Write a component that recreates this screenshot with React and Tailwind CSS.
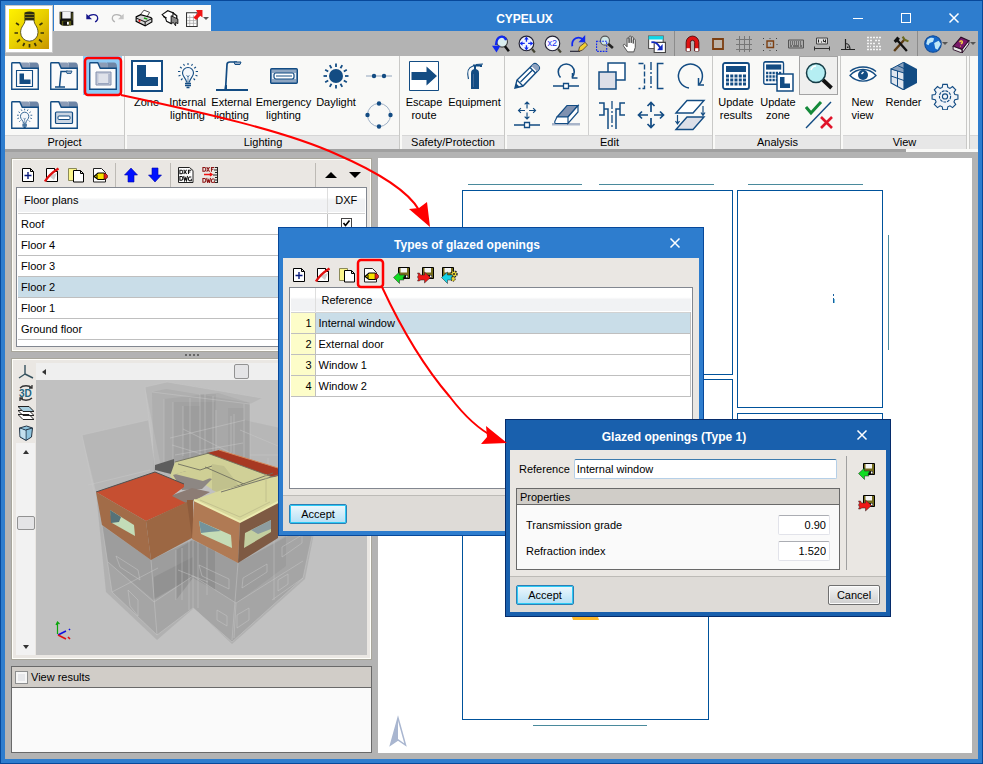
import React from "react";

const NAVY = "#134c83";

/* ---------- small toolbar drawings (16 x 16) ---------- */

function Px({ children, size = 16, box = "0 0 16 16" }) {
  return (
    <svg width={size} height={size} viewBox={box} fill="none" className="block shrink-0" aria-hidden="true">
      {children}
    </svg>
  );
}

const SheetPath = () => <path d="M2.5 1.5h8l3 3v10h-11z M10.5 1.5v3h3" fill="#fff" stroke="#000" />;

const AddIcon = () => (
  <Px>
    <SheetPath />
    <path d="M4.5 8.500h7M8 5v7" stroke="#0a1a7c" strokeWidth="1.400" />
  </Px>
);
const RemoveIcon = () => (
  <Px>
    <SheetPath />
    <path d="M5 9l5 4 3-7z" fill="#cfcfcf" />
    <path d="M1 14.500C4 9 9 5 14.500 1.500" stroke="#e01010" strokeWidth="2.400" />
  </Px>
);
const CopyIcon = () => (
  <Px>
    <path d="M.500 1.500h8v12h-8z" fill="#fbf58a" stroke="#8b8a58" />
    <path d="M5.500 3.500h7l3 3v8.500h-10z M12.500 3.500v3h3" fill="#fff" stroke="#000" />
  </Px>
);
const EditIcon = () => (
  <Px>
    <path d="M1.500 1.500h8l4 4v9.500h-12z" fill="#fff" stroke="#222" />
    <path d="M2 9.500l4-3.500h6l2 1.500v3.500l-2 1.500H6z" fill="#f7e300" stroke="#000" strokeWidth="1.200" />
    <path d="M12 6.500h1.500l2 2v2l-2 1.500H12z" fill="#e02020" stroke="#500" strokeWidth=".6" />
    <path d="M5 8v3" stroke="#000" />
  </Px>
);
const ArrowUpBlue = () => (
  <Px>
    <path d="M8 1l6.500 7H11v7H5V8H1.500z" fill="#0010ff" stroke="#0008a8" strokeWidth=".6" />
  </Px>
);
const ArrowDownBlue = () => (
  <Px>
    <path d="M8 15L1.500 8H5V1h6v7h3.500z" fill="#0010ff" stroke="#0008a8" strokeWidth=".6" />
  </Px>
);
const DxfIcon = ({ red }) => (
  <Px>
    {!red && <path d="M.500 .500h11l3.500 3v12H.500z" fill="#fff" stroke="#222" />}
    <g stroke={red ? "#8c1414" : "#111"} strokeWidth="1.100">
      <path d="M2 1.500h2l1 1v2l-1 1H2zM6 1l3 5M9 1L6 6M11 6V1.500h3M11 3.500h2" transform={red ? "translate(-1 -1) scale(.95 .95)" : "translate(0 2) scale(.95 .85)"} />
      <path d="M2 1.500h2l1 1v2l-1 1H2zM6 1l1 5 1-3 1 3 1-5M14 2h-2l-1 1v2l1 1h2V4" transform={red ? "translate(-1 10) scale(.95 .95)" : "translate(0 8) scale(.95 .95)"} />
    </g>
    {red && (
      <>
        <path d="M2 7.500h8M8 6l2 1.500L8 9" stroke="#f01010" strokeWidth="1.400" />
        <path d="M13 .500h3M12 3h4M13 5.500h3M11 8h5M13 10.500h3M12 13h4M13 15.500h3M15.500 0v16" stroke="#222" />
      </>
    )}
  </Px>
);
const Floppy = ({ arrow, right, gears }) => (
  <Px size={17} box="0 0 17 17">
    <g transform={gears ? "translate(-4 0)" : undefined}>
      <path d="M5.500.500h11v11h-9l-2-2z" fill="#746c1c" stroke="#000" />
      <path d="M7.500 1h6.500v4.500H7.500z" fill="#f4f4f4" />
      <path d="M9 8h6v3.500H9z" fill="#111" />
      <path d="M13 8.500h1.500v2H13z" fill="#fff" />
    </g>
    {gears && (
      <g>
        <circle cx="13" cy="7" r="3" fill="#e8d83a" stroke="#222" strokeDasharray="1.500 1" strokeWidth="1.400" />
        <circle cx="13" cy="7" r="1" fill="#222" />
        <circle cx="12" cy="12" r="2.200" fill="#e8d83a" stroke="#222" strokeDasharray="1.200 .8" />
      </g>
    )}
    {right ? (
      <path d="M.500 6h2l1 2h4V5l6 5.500-6 5.500v-3h-4l-1 1h-2l1-2-1-2 1-2z" fill={arrow} stroke="#222" strokeWidth=".5" />
    ) : (
      <path d="M.500 10.500L6.500 5v3h5.500l-2 3 1 2H6.500v3.500z" fill={arrow} stroke="#222" strokeWidth=".5" />
    )}
  </Px>
);

const SaveIcon = () => (
  <Px size={15}>
    <path d="M.7.7h14.600v14.600H2.500L.7 13.500z" fill="#111" />
    <path d="M3.500 1h9v7h-9z" fill="#f4f4f4" />
    <path d="M3 10.500h10v5H3z" fill="#5b5b14" />
    <path d="M4.500 11h6v4.500h-6z" fill="#111" />
    <path d="M8.500 11.500h2v3h-2z" fill="#fff" />
    <path d="M1.500 1v8M14 2v8" stroke="#6c6c28" />
  </Px>
);
const UndoIcon = ({ gray }) => (
  <Px size={14}>
    <g transform={gray ? "matrix(-1 0 0 1 16 0)" : undefined} stroke={gray ? "#b4b4b4" : "#16168c"} strokeWidth="1.400">
      <path d="M3 7.500C6 3 14 3 14.500 8c.200 2-1 3.500-3 4.500" />
      <path d="M1.500 3v6.500h6.500z" fill={gray ? "#c4c4c4" : "#16168c"} stroke="none" />
    </g>
  </Px>
);
const PrinterIcon = () => (
  <Px size={18}>
    <path d="M4 6l4-5 5 2-3 5z" fill="#fff" stroke="#333" strokeWidth=".8" />
    <path d="M1 7l4-2 9 2.500 1 1v3l-6 3.500L1 11z" fill="#d4d4d4" stroke="#000" />
    <path d="M1 8l8 3.500 6-3M9 11.500V15" stroke="#000" strokeWidth=".8" />
    <circle cx="4" cy="10.500" r="1" fill="#e22" />
    <path d="M8 8l3 1" stroke="#12a012" strokeWidth="1.400" />
  </Px>
);
const PreviewIcon = () => (
  <Px size={18}>
    <path d="M1 5l5-3.500 5 2L9 13l-4-2-1-3z" fill="#fff" stroke="#111" />
    <path d="M2 6.500l3 1.500M10 3l4 3v6" stroke="#111" strokeWidth="1.200" />
    <path d="M9 6l6 3v4l-2-1v3l-2-3-2 1z" fill="#888" stroke="#111" strokeWidth=".8" />
  </Px>
);
const ExportIcon = () => (
  <Px size={17}>
    <path d="M.500 2.500h10v13H.500z" fill="#fff" stroke="#333" />
    <path d="M3.500 5v10M7 5v10M1 7h9M1 10h9M1 12.500h9" stroke="#a5a5a5" strokeWidth=".7" />
    <path d="M15.500 0v7l-2-1.500-4 4-2.500-2.500 4-4L9.500 0z" fill="#f01414" />
  </Px>
);

/* ---------- view tools ---------- */

const ZoomPrev = () => (
  <Px size={18}>
    <circle cx="9" cy="6" r="4.800" fill="#dbeeee" stroke="#444" />
    <path d="M11.500 10l3.500 4.500" stroke="#111" strokeWidth="2.200" />
    <path d="M12.500 4.500C11 0 4 0 3.500 9" stroke="#1029f0" strokeWidth="2" />
    <path d="M0 9.500h7.500L4 15.500z" fill="#1029f0" />
  </Px>
);
const ZoomAll = () => (
  <Px size={18}>
    <circle cx="7.500" cy="7.500" r="6.500" fill="#f0f4ff" stroke="#223" />
    <path d="M12.500 12.500l2.500 3" stroke="#443" strokeWidth="2" />
    <path d="M7.500 2v11M2 7.500h11" stroke="#1029f0" strokeWidth="1.200" strokeDasharray="4 3" />
    <path d="M7.500 1.500l2 2.500h-4zM7.500 13.500l2-2.500h-4zM1.500 7.500L4 5.500v4zM13.500 7.500L11 5.500v4z" fill="#1029f0" />
  </Px>
);
const ZoomX2 = () => (
  <svg width="18" height="18" viewBox="0 0 16 16" className="block" aria-hidden="true">
    <circle cx="7.500" cy="7.500" r="6.500" fill="#f8f8ff" stroke="#223" />
    <path d="M12.500 12.500l2.500 3" stroke="#443" strokeWidth="2" />
    <text x="3" y="10.200" fontSize="8" fill="#1029f0" fontFamily="Liberation Sans, sans-serif">x2</text>
  </svg>
);
const Redraw = () => (
  <Px size={18}>
    <path d="M2 10C1 3 8 0 12 4.500" stroke="#1029f0" strokeWidth="1.600" />
    <path d="M13.500 0v6.500H7.500z" fill="#1029f0" />
    <path d="M0 14.500h9" stroke="#223" />
    <path d="M7.500 14.500l1-4 5-4 2 2.500-4.500 4.500z" fill="#f2cf30" stroke="#433" strokeWidth=".7" />
  </Px>
);
const ZoomWindow = () => (
  <Px size={18}>
    <circle cx="8" cy="5" r="4" fill="#cfe6e6" stroke="#555" />
    <path d="M11 8l4 3.500" stroke="#222" strokeWidth="2.300" />
    <path d="M.500 5.500h9v9h-9z" stroke="#1029f0" strokeDasharray="1.500 1" />
  </Px>
);
const HandIcon = () => (
  <Px size={18}>
    <path
      d="M5 15l-3.500-5c-1-1.500.500-2.500 1.500-1l1.500 1.500V3.500c0-1.500 1.800-1.500 1.800 0V7 2c0-1.500 1.900-1.500 1.900 0v5-4.500c0-1.500 1.800-1.300 1.800 0V7.500 4.500c0-1.300 1.800-1.300 1.800 0V11l-1.300 4z"
      fill="#fff"
      stroke="#444"
      strokeWidth=".8"
    />
  </Px>
);
const RegenIcon = () => (
  <Px size={18}>
    <path d="M.500 1h13v11H.500z" fill="#fff" stroke="#555" />
    <path d="M.500 1h13v3H.500z" fill="#10d8e8" />
    <path d="M5.500 6.500h10v9h-10z" fill="#fff" stroke="#444" />
    <path d="M3 6.500c4-1 6 2 8 5" stroke="#1029c0" strokeWidth="1.600" />
    <path d="M13 8v5.500H8z" fill="#1029c0" />
  </Px>
);
const MagnetIcon = () => (
  <Px size={17}>
    <path d="M2 15V7a6 6 0 0112 0v8h-4V7a2 2 0 00-4 0v8z" fill="#e01212" stroke="#4a0808" strokeWidth=".8" />
    <path d="M2.500 12.500h3V15h-3zM10.500 12.500h3V15h-3z" fill="#fff" />
  </Px>
);
const SquareIcon = () => (
  <Px>
    <path d="M3 3h10v10H3z" fill="#bdb5ab" stroke="#7c3f12" strokeWidth="1.800" />
  </Px>
);
const GridIcon = () => (
  <Px>
    <path d="M3.500 0v16M8.500 0v16M13.500 0v16M0 3.500h16M0 8.500h16M0 13.500h16" stroke="#777" />
  </Px>
);
const OrthoIcon = () => (
  <Px>
    <path d="M5 5h6.500v6.500H5z" stroke="#7c3f12" strokeWidth="1.400" />
    <path d="M8 7.500h1v1H8z" fill="#7c3f12" />
    <path d="M1 2.500h14M1 14.500h14" stroke="#444" strokeDasharray="1 5.500" />
    <path d="M1 8.500h1M14.500 8.500h1" stroke="#444" />
  </Px>
);
const KeyboardIcon = () => (
  <Px>
    <path d="M.500 4h15v8H.500z" fill="#aaa" stroke="#555" />
    <path d="M2 6h12M2 8h12" stroke="#333" strokeDasharray="1 1" />
    <path d="M2 10h2M5 10h6M12 10h2" stroke="#333" />
  </Px>
);
const DimIcon = () => (
  <Px>
    <path d="M2.500 2h11v6h-11z" fill="#ddd" stroke="#444" />
    <path d="M4.500 3.500v3M7 6h1M9.500 3.500v2h2M11.500 3.500v3" stroke="#222" />
    <path d="M0 12.500h16M.500 10.500v4M15.500 10.500v4" stroke="#333" />
  </Px>
);
const AngleIcon = () => (
  <Px>
    <path d="M1 13.500h14M5.500 3v10.500M5.500 7.500c3 0 4.500 3 4.500 6" stroke="#222" strokeWidth="1.200" />
    <path d="M7 10.500h1.500V12H7z" fill="#222" />
  </Px>
);
const MaskIcon = () => (
  <Px>
    <path d="M1 1.500h14M1 4.500h6M9 4.500h6M1 7.500h9M12 7.500h3M1 10.500h4M7 10.500h8M1 13.500h14" stroke="#f4f4f4" strokeDasharray="2 1" strokeWidth="1.500" />
  </Px>
);
const ToolsIcon = () => (
  <Px size={17}>
    <path d="M2 15L12 4" stroke="#5a3b14" strokeWidth="2.200" />
    <path d="M10 1.500l2 3 3.500 1.500" stroke="#6b6a20" strokeWidth="2" />
    <path d="M14 15L5 5" stroke="#111" strokeWidth="2.200" />
    <path d="M1.500 5.500L5 1.500l2.500 2-4 4z" fill="#111" />
  </Px>
);
const GlobeIcon = () => (
  <Px size={18}>
    <circle cx="8" cy="8" r="7.300" fill="#1567c9" stroke="#0d4a99" />
    <path d="M3 4c2-2 5-2 6-1l-1 3-3 1-1 2-2-1zM9 7l4-2 2 3-3 5-2-1z" fill="#bfe6f7" />
  </Px>
);
const BookIcon = () => (
  <Px size={18}>
    <path d="M1 10l7-8 7 3-6 8z" fill="#7b1a6a" stroke="#2a0a25" />
    <path d="M1 10v3l8 3v-3zM9 13v3l6-8V5z" fill="#e8e8e8" stroke="#2a0a25" strokeWidth=".8" />
    <path d="M7 6.500c0-2 3-1.500 2 .500l-1 1M7.500 10h.500" stroke="#f6d743" strokeWidth="1.300" />
  </Px>
);

/* ---------- ribbon drawings ---------- */

function Pic({ w = 28, h = 28, box = "0 0 28 28", children }) {
  return (
    <svg width={w} height={h} viewBox={box} fill="none" className="block shrink-0" aria-hidden="true">
      {children}
    </svg>
  );
}

const Bulb = () => (
  <>
    <path d="M12.500 20c-.5-4-4-5-4-9a5.500 5.500 0 0111 0c0 4-3.500 5-4 9z" fill="#f4f7fb" stroke={NAVY} strokeWidth="1.100" />
    <path d="M11 21.500h6M11 23.500h6M12.500 25.500h3" stroke={NAVY} strokeWidth="1.400" />
    <path d="M14 14v5M12.500 13l1.500 2 1.500-2" stroke={NAVY} strokeWidth=".6" />
    <path
      d="M14 1v2M9.500 2l1 1.800M18.500 2l-1 1.800M6 5l1.800 1.200M22 5l-1.800 1.200M4 9.500h2.300M21.700 9.500H24M4.500 14l2-.8M23.500 14l-2-.8M7 18l1.500-1.500M21 18l-1.500-1.500"
      stroke={NAVY}
      strokeWidth="1.100"
    />
  </>
);

const Folder = ({ children }) => (
  <Pic>
    <path d="M9 .500h7.500c1.500 0 2.500 2 2.500 3.500v3H11z" fill="#8c9cb6" />
    <path d="M17.500.500H25c2 0 3 2 3 4v3h-9V4c0-1.500-.5-3-1.500-3.500z" fill="#6f86a6" />
    <path d="M.750 27.250V1.500q0-.75.75-.75h7.250l2.500 5.500h16v21z" fill="#fbfbfb" stroke={NAVY} strokeWidth="1.400" />
    {children}
  </Pic>
);

const FolderZone = () => (
  <Folder>
    <path d="M5.500 8.500h16v16h-16z" stroke={NAVY} strokeWidth="1.100" />
    <path d="M8.500 11.500H13v6h6.500v4.500h-11z" fill={NAVY} />
  </Folder>
);
const FolderLamp = () => (
  <Folder>
    <path d="M5 25h10M9.500 25L11 9.500h7" stroke={NAVY} strokeWidth="1.500" />
    <path d="M16 9h6l-1 2.500h-4z" fill="#9fb2c9" stroke={NAVY} strokeWidth=".8" />
  </Folder>
);
const FolderOpening = () => (
  <Folder>
    <path d="M7 10h15v13H7z" fill="#c3c9d8" stroke="#8592ae" />
    <path d="M9.500 12h10v9h-10z" fill="#dfe2ea" />
    <path d="M20 21v-9M9 21.500h11" stroke="#9aa5be" />
  </Folder>
);
const FolderBulb = () => (
  <Folder>
    <g transform="translate(3 7) scale(.76)">
      <Bulb />
    </g>
  </Folder>
);
const FolderEmergency = () => (
  <Folder>
    <rect x="5.500" y="11" width="17" height="11.500" rx="1" fill="#cbd6e3" stroke={NAVY} strokeWidth="1.200" />
    <rect x="8" y="15" width="12" height="3.500" rx="1" fill="#fff" stroke={NAVY} />
  </Folder>
);

const ZoneIcon = () => (
  <Pic w={32} h={32} box="0 0 32 32">
    <path d="M1 1h30v30H1z" fill="#fff" stroke={NAVY} strokeWidth="2" />
    <path d="M6 5h9v12h12v9H6z" fill={NAVY} />
  </Pic>
);
const BulbIcon = () => (
  <Pic>
    <Bulb />
  </Pic>
);
const LampIcon = () => (
  <Pic w={32} h={32} box="0 0 32 32">
    <path d="M0 30h32" stroke={NAVY} strokeWidth="2" />
    <path d="M9.500 30L11 4.500c0-1.500 1-2.500 3-2.500h7" stroke={NAVY} strokeWidth="1.700" />
    <path d="M18 2h7l-1 2.500h-5z" fill="#9fb2c9" stroke={NAVY} />
    <path d="M8.500 29l.500-4h2v4z" fill={NAVY} />
  </Pic>
);
const EmergencyIcon = () => (
  <Pic>
    <rect x=".7" y="6.700" width="26.600" height="14.600" rx="1" fill="#8ea6c2" stroke={NAVY} strokeWidth="1.400" />
    <path d="M2 11h24v6H2z" fill="#e6edf4" />
    <rect x="4" y="11" width="20" height="6" rx="2" fill="#fff" stroke={NAVY} strokeWidth="1.200" />
    <path d="M6 14h16" stroke={NAVY} />
  </Pic>
);
const SunIcon = () => (
  <Pic>
    <circle cx="14" cy="14" r="7" fill={NAVY} />
    {[0, 30, 60, 90, 120, 150, 180, 210, 240, 270, 300, 330].map((a) => (
      <path key={a} d="M14 1.500v3.500" stroke={NAVY} strokeWidth="1.800" transform={`rotate(${a} 14 14)`} />
    ))}
  </Pic>
);
const LineDots = () => (
  <Pic>
    <path d="M1 14h26" stroke="#b3c0d1" strokeWidth="1.500" />
    <circle cx="9" cy="14" r="2.200" fill={NAVY} />
    <circle cx="19" cy="14" r="2.200" fill={NAVY} />
  </Pic>
);
const CircleDots = () => (
  <Pic>
    <circle cx="14" cy="14" r="11.500" stroke="#9eb0c6" />
    {[[14, 2.5], [14, 25.5], [2.5, 14], [25.5, 14]].map(([x, y]) => (
      <circle key={`${x}-${y}`} cx={x} cy={y} r="2.200" fill={NAVY} />
    ))}
  </Pic>
);
const EscapeIcon = () => (
  <Pic w={30} h={30} box="0 0 30 30">
    <path d="M.500.500h29v29H.500z" fill="#fff" stroke={NAVY} />
    <path d="M2.500 11h15V5.500L28 15l-10.500 9.500V19h-15z" fill={NAVY} />
  </Pic>
);
const ExtinguisherIcon = () => (
  <Pic>
    <path d="M10 27V11c0-3 2-4 4-4s4 1 4 4v16z" fill={NAVY} />
    <path d="M12 3.500h8v1.500M14 3v5" stroke={NAVY} strokeWidth="2" />
    <path d="M15 2.500l7-.5M12 4C7 5.500 5.500 9 7.500 17" stroke={NAVY} strokeWidth="1.200" />
    <path d="M12.500 12v13" stroke="#3d6797" />
  </Pic>
);
const PencilIcon = () => (
  <Pic>
    <path d="M2 26l2-8L20 2.500c1.500-1.500 3-1 4 0l1.500 1.500c1 1 1.300 2.500 0 4L10 24z" fill="#fff" stroke={NAVY} strokeWidth="1.400" />
    <path d="M18.500 4L24 9.500l2-2.500c.5-1.500 0-2.500-1-3.500l-1.500-1c-1-1-2.500-.5-3.500 0z" fill="#8ea2bf" />
    <path d="M17 5.500l5.500 5.500M7.500 20L19.500 8M4 18l6 6" stroke={NAVY} strokeWidth="1.300" />
    <path d="M2 26l1.200-4.500 3.300 3.300z" fill={NAVY} />
  </Pic>
);
const RotateNode = () => (
  <Pic>
    <path d="M8.500 15.500a8 8 0 1111.500 0" stroke={NAVY} strokeWidth="1.600" />
    <path d="M20.500 11v5h5" stroke={NAVY} strokeWidth="1.500" />
    <path d="M1 24h10M17 24h10" stroke={NAVY} strokeWidth="1.500" />
    <path d="M11.500 21.500h5v5h-5z" fill="#fff" stroke={NAVY} strokeWidth="1.300" />
  </Pic>
);
const MoveArrows = () => (
  <path d="M14 2v9M14 17v9M2 14h9M17 14h9M10.500 5L14 1.500 17.500 5M10.500 23l3.500 3.500 3.500-3.500M5 10.500L1.500 14 5 17.500M23 10.500l3.500 3.500-3.500 3.500" stroke={NAVY} strokeWidth="1.700" />
);
const MoveNode = () => (
  <Pic>
    <g transform="translate(4.500 0) scale(.68)">
      <MoveArrows />
    </g>
    <path d="M1 24h10M17 24h10" stroke={NAVY} strokeWidth="1.500" />
    <path d="M11.500 21.500h5v5h-5z" fill="#fff" stroke={NAVY} strokeWidth="1.300" />
  </Pic>
);
const EraserIcon = () => (
  <Pic>
    <path d="M0 22h28v2.500H0z" fill="#a9b5c9" />
    <path d="M5 16L15 4.500h11L16 16z" fill="#7f91b0" stroke={NAVY} strokeWidth="1.200" />
    <path d="M5 16h11v6.500H3.500c-1 0-1-2 0-3.500zM16 16L26 4.500V11l-10 11.500z" fill="#fff" stroke={NAVY} strokeWidth="1.200" />
  </Pic>
);
const CopyShapes = () => (
  <Pic>
    <path d="M10 1h17v17H10z" fill="#fff" stroke={NAVY} strokeWidth="1.500" />
    <path d="M1 10h17v17H1z" fill="#dcdfe8" stroke={NAVY} strokeWidth="1.500" />
  </Pic>
);
const MirrorIcon = () => (
  <Pic>
    <path d="M1.500 1.500h6v25h-6" stroke={NAVY} strokeWidth="1.400" strokeDasharray="5 2" />
    <path d="M14 0v28" stroke={NAVY} strokeWidth="1.400" strokeDasharray="8 2 2 2" />
    <path d="M26.500 1.500h-6v25h6" stroke={NAVY} strokeWidth="1.500" />
  </Pic>
);
const TurnIcon = () => (
  <Pic>
    <path d="M13 26a12 12 0 1110-3.500" stroke={NAVY} strokeWidth="1.500" />
    <path d="M22.500 16v7h6" stroke={NAVY} strokeWidth="1.500" />
  </Pic>
);
const SplitIcon = () => (
  <Pic>
    <path d="M1 2h5v6h4v20M27 2h-5v6h-4v20M1 14h5V8M27 14h-5V8" stroke={NAVY} strokeWidth="1.500" />
    <path d="M14 0v28" stroke={NAVY} strokeWidth="1.300" strokeDasharray="8 2 2 2" />
  </Pic>
);
const MoveIcon = () => (
  <Pic>
    <MoveArrows />
  </Pic>
);
const LayersMove = () => (
  <Pic w={32} h={32} box="0 0 32 32">
    <path d="M2 14L13 1.500h17L19 14z" fill="#fff" stroke={NAVY} strokeWidth="1.400" />
    <path d="M2 30.500L13 18h17L19 30.500z" fill="#dcdfe8" stroke={NAVY} strokeWidth="1.400" />
    <path d="M29 7v9M27 13.500l2 3 2-3M3.500 16v9M1.500 22l2 3 2-3" stroke={NAVY} strokeWidth="1.200" />
  </Pic>
);
const CalcShape = () => (
  <>
    <rect x="1" y="1" width="26" height="26" rx="2" fill="#fff" stroke={NAVY} strokeWidth="1.800" />
    <path d="M4 4h20v6H4z" fill={NAVY} />
    {[12.5, 16.5, 20.5].map((y) => (
      <path key={y} d={`M4 ${y + 1.5}h20`} stroke={NAVY} strokeWidth="3" strokeDasharray="3 1.250" />
    ))}
  </>
);
const CalcIcon = () => (
  <Pic>
    <CalcShape />
  </Pic>
);
const CalcZone = () => (
  <Pic w={32} h={32} box="0 0 32 32">
    <g transform="translate(1 1) scale(.76 .86)">
      <CalcShape />
    </g>
    <path d="M15 14h16v17H15z" fill="#fff" stroke={NAVY} strokeWidth="1.500" />
    <path d="M18 17h4.500v6.500H28V28H18z" fill={NAVY} />
  </Pic>
);
const LoupeIcon = () => (
  <Pic>
    <circle cx="11" cy="11" r="9.500" fill="#b5eef3" stroke="#143c46" strokeWidth="1.500" />
    <path d="M6 8c1-3 3-4 5-4" stroke="#fff" strokeWidth="1.500" />
    <path d="M18 18l8.500 8" stroke="#111" strokeWidth="3.800" />
  </Pic>
);
const CheckCross = () => (
  <Pic>
    <path d="M1 27L26 1" stroke={NAVY} strokeWidth="1.400" />
    <path d="M1 6l5 6L16 1" stroke="#158a3a" strokeWidth="3" />
    <path d="M16 16l11 11M27 16L16 27" stroke="#e0142a" strokeWidth="2.600" />
  </Pic>
);
const EyeIcon = () => (
  <Pic>
    <path d="M1 13.500c7-8 19-8 26 0-7 7.500-19 7.500-26 0z" fill="#fff" stroke={NAVY} strokeWidth="1.300" />
    <path d="M1 9.500C8 3.500 20 3.500 27 9.500" stroke={NAVY} strokeWidth="1.300" />
    <circle cx="14" cy="13" r="5" fill={NAVY} />
    <path d="M12.500 12l2-2" stroke="#fff" strokeWidth="1.400" />
  </Pic>
);
const RenderIcon = () => (
  <Pic>
    <path d="M14 0l13 7v14l-13 7z" fill={NAVY} />
    <path d="M14 10v18L1 21V7z" fill="#e1e7ef" stroke={NAVY} strokeWidth="1.200" />
    <path d="M14 0L1 7l13 4V0z" fill="#8aa2bf" stroke={NAVY} />
    <path d="M1 14l13 4.500M7.500 9v15.500M7.500 3.500l6.500 3" stroke={NAVY} />
  </Pic>
);
const GearIcon = () => (
  <Pic>
    <g stroke={NAVY} strokeWidth="1.200" transform="translate(1 .500) scale(.93)">
      <path d="M11.600 2h4.800l.6 3.300 2.300 1 2.800-1.900 3.400 3.400-1.900 2.800 1 2.300 3.300.6v4.400l-3.300.6-1 2.300 1.900 2.800-3.400 3.400-2.800-1.900-2.300 1-.6 3.300h-4.800l-.6-3.300-2.300-1-2.800 1.900-3.400-3.400 1.900-2.800-1-2.300-3.300-.6v-4.400l3.300-.6 1-2.300-1.900-2.800 3.400-3.400 2.800 1.900 2.300-1z" fill="#f1f4f8" />
      <circle cx="14" cy="15" r="6" strokeDasharray="3 1" />
      <circle cx="14" cy="15" r="2.800" />
    </g>
  </Pic>
);

/* ---------- ribbon pieces ---------- */

function Ribbon({ label, className, children }) {
  return (
    <section className={"flex shrink-0 flex-col border-r border-[#c9c9c7] " + className}>
      <div className="flex h-[79px]">{children}</div>
      <h2 className="h-[14px] border-t border-[#d6d6d6] bg-[#e7e7e7] text-center leading-[13px]">{label}</h2>
    </section>
  );
}

function BigButton({ icon, label, className }) {
  return (
    <button type="button" className={"flex shrink-0 flex-col items-center " + className}>
      <span className="flex h-10 items-center">{icon}</span>
      <span className="text-center leading-[13px] whitespace-pre">{label}</span>
    </button>
  );
}

function IconButton({ icon, label, className = "" }) {
  return (
    <button type="button" aria-label={label} className={"flex size-[39px] shrink-0 items-center justify-center " + className}>
      {icon}
    </button>
  );
}

function Tool({ icon, label, className = "w-6" }) {
  return (
    <button type="button" aria-label={label} className={"flex h-6 shrink-0 items-center justify-center " + className}>
      {icon}
    </button>
  );
}

const Caret = () => <span className="border-x-[3px] border-t-[3px] border-x-transparent border-t-[#555]" />;

/* ---------- title bars ---------- */

const CloseGlyph = () => (
  <svg width="12" height="12" viewBox="0 0 12 12" aria-hidden="true">
    <path d="M1.500 1.500l9 9M10.500 1.500l-9 9" stroke="#fff" strokeWidth="1.500" />
  </svg>
);

function Dialog({ title, dark, className, children }) {
  return (
    <section
      role="dialog"
      aria-label={title}
      className={
        "absolute flex flex-col border px-1 pb-1 " +
        (dark ? "border-[#062c6b] bg-[#1960ad] " : "border-[#07489a] bg-[#2e7dce] ") +
        className
      }
    >
      <header className="flex h-[30px] shrink-0 items-center text-white">
        <h2 className="grow pt-1 text-center text-xs font-bold">{title}</h2>
        <button type="button" aria-label="Close" className="flex h-full w-12 items-center justify-center">
          <CloseGlyph />
        </button>
      </header>
      <div className="flex grow flex-col bg-[#eae7e3]">{children}</div>
    </section>
  );
}

function PushButton({ primary, className, children }) {
  return (
    <button
      type="button"
      className={
        "h-5 rounded-[2px] border leading-[16px] " +
        (primary
          ? "border-[#2c7fb5] bg-linear-to-b from-[#eef8fd] to-[#b4dff5] shadow-[inset_0_0_0_1px_#2ccaf5] "
          : "border-[#707070] bg-linear-to-b from-[#f4f4f4] to-[#cfcfcf] shadow-[inset_0_0_0_1px_#fbfbfb] ") +
        className
      }
    >
      {children}
    </button>
  );
}

/* ---------- floor plans ---------- */

const floors = ["Roof", "Floor 4", "Floor 3", "Floor 2", "Floor 1", "Ground floor"];

function FloorPlans() {
  return (
    <section className="flex h-[194px] flex-col border border-[#a8a69c] bg-[#eae7e3] px-1 pt-1 pb-1 shadow-[inset_0_0_0_1px_#fffffa]">
      <div className="flex h-6 items-center">
        <Tool label="Add" icon={<AddIcon />} />
        <Tool label="Delete" icon={<RemoveIcon />} />
        <Tool label="Copy" icon={<CopyIcon />} />
        <Tool label="Edit" icon={<EditIcon />} />
        <span className="mx-[3px] h-full w-px bg-[#bdbab5]" />
        <Tool label="Move up" icon={<ArrowUpBlue />} />
        <Tool label="Move down" icon={<ArrowDownBlue />} />
        <span className="mx-[3px] h-full w-px bg-[#bdbab5]" />
        <Tool label="DXF files" icon={<DxfIcon />} />
        <Tool label="DXF layers" icon={<DxfIcon red />} />
        <span className="mr-[3px] ml-auto h-full w-px bg-[#bdbab5]" />
        <Tool label="Previous floor" icon={<span className="border-x-[6px] border-b-[6px] border-x-transparent border-b-black" />} />
        <Tool label="Next floor" icon={<span className="border-x-[6px] border-t-[6px] border-x-transparent border-t-black" />} />
      </div>
      <div className="grow border border-[#828790] bg-white px-px">
        <table className="w-full table-fixed border-collapse">
          <thead>
            <tr className="h-[25px] border-b border-[#d2d2d2] bg-linear-to-b from-white from-40% to-[#f1f2f4] to-50%">
              <th className="pl-1.5 text-left font-normal">Floor plans</th>
              <th className="w-[38px] border-l border-[#dedede] text-center font-normal">DXF</th>
            </tr>
          </thead>
          <tbody>
            {floors.map((f) => (
              <tr key={f} className={"h-[21px] border-b border-[#bfbfbf] " + (f === "Floor 2" ? "bg-[#c9dde8]" : "")}>
                <td className="pl-[3px]">{f}</td>
                <td className="border-l border-[#bfbfbf]">
                  <span className="flex justify-center">
                    <span className="relative size-[11px]">
                      <input type="checkbox" defaultChecked aria-label={"DXF " + f} className="block size-[11px] appearance-none border border-[#444] bg-white" />
                      <svg viewBox="0 0 11 11" className="pointer-events-none absolute inset-0" aria-hidden="true">
                        <path d="M2.500 5l2 2.500 4-5" fill="none" stroke="#000" strokeWidth="1.600" />
                      </svg>
                    </span>
                  </span>
                </td>
              </tr>
            ))}
          </tbody>
        </table>
      </div>
    </section>
  );
}

/* ---------- 3D view ---------- */

function Building() {
  return (
    <svg viewBox="36 380 331 275" preserveAspectRatio="xMidYMid slice" className="block size-full" aria-hidden="true">
      <g fill="#7c7c7c" fillOpacity=".14">
        <path d="M82 435l66-15 7 45v8l-59 19z" />
        <path d="M145 387l22-5 95 16-12 6v60l-88 8z" />
        <path d="M152 392l14-3 84 14v80h-96z" />
        <path d="M164 399l54-6 32 10v70h-86z" />
        <path d="M173 402h42v64l-42-6z" />
        <path d="M183 406h24v58h-24zM200 394h16v70h-16zM228 408h16v56h-16z" />
        <path d="M244 420l36 8v60h-36z" />
        <path d="M96 492l10 100 51 48 37-32 38 36 73-65 9-46-40-10z" fillOpacity=".22" />
        <path d="M102 525l10 67 45 43 36-27 39 34 71-64 9-42-20-2-54 29-46-23-41 20z" fillOpacity=".22" />
        <path d="M108 562l46 38 39-24 43 27 50-37v-30l-48 27-46-23-41 20-49-34z" fillOpacity=".2" />
        <path d="M176 550l17-10 22 10v40l-22-12-17 22z" fillOpacity=".4" />
        <path d="M154 577l39-20v20l-39 22z" fillOpacity=".3" />
      </g>
      <g fill="none" stroke="#c9c9c9" strokeOpacity=".6" strokeWidth=".8">
        <path d="M82 435l66-15M82 435l12 57M88 485l62-15M145 387l22-5 95 16M145 387l10 80M164 399v70M173 402v60M183 406v50M190 398v60M200 394v68M205 394v68M213 396v55M216 410v55M231 416v36M234 414v40M244 404v60M250 403v70M152 392l98 12M170 438l75-18M172 445l78 24M175 455l68-12M183 429l60 30M240 430l38 16M250 455h28M268 458v36" />
        <path d="M102 525l10 67 45 43 36-27 39 34 71-64 9-42M151 560l6 75M154 602l39-26 43 27 67-42M108 562l46 40M238 563l-6 77M193 540v68M189 540v70M198 540v68M176 550v50M182 548v52M207 545v50M274 540v60M272 600l31-22M236 603l-2 35M112 592l46-24M178 570l30 12" />
        <path d="M116 556l22 14 2 10-20-13zM199 565l30 14v10l-27-13zM243 578l24-14v8l-25 16zM282 547l20-12v8l-20 14zM128 590l10 10v16l-8-10zM237 615l12-7v12l-12 8zM217 610l10 6v10l-10-6zM278 580l10-6v10l-10 7z" />
      </g>
      <path d="M155 465l19-6 1 16-20-5z" fill="#5d5d5d" />
      <path d="M175 462l34-9 69 24v26l-38 19-46-22 22-8-12-8-24 4-10-12z" fill="#d0d097" />
      <path d="M173 475l13-4 26 8-10 10-20 1z" fill="#8d8783" />
      <path d="M175 474l30-8 20 6-22 9z" fill="#cfcf95" />
      <path d="M212 464l12 2 20 26-12 6-20-8z" fill="#b7b787" fillOpacity=".6" />
      <path d="M207 453l12-3 59 18v11z" fill="#a73822" />
      <path d="M219 450l59 18" stroke="#d48558" />
      <path d="M207 453l71 26M221 492l52-19M205 467l73 32M175 462l34-9M178 464l22 6 12-4" stroke="#6f6f60" fill="none" strokeWidth=".9" />
      <path d="M170 496l22-8 18 4-16 9-8 3z" fill="#8c7c74" />
      <path d="M187 500h6v38h-6z" fill="#8e5c3c" />
      <path d="M96 492l59-20 29 12v3l-12 9 14 7-40 18z" fill="#c64f31" />
      <path d="M96 492l59-20 29 12" stroke="#4f4f4f" fill="none" />
      <path d="M96 492l50 29 5 39-49-35z" fill="#a26c48" />
      <path d="M146 521l41-19 5 36-41 22z" fill="#9c6743" />
      <path d="M194 500l46 22-2 41-46-24z" fill="#b07a54" />
      <path d="M240 522l38-20v36l-40 25z" fill="#7e5a43" />
      <path d="M194 500l28-10 56-14v26l-38 20z" fill="#d8d89c" />
      <path d="M194 500l46 22 38-20" stroke="#ecebb0" strokeWidth="2" fill="none" />
      <path d="M221 492l57-17" stroke="#77776a" fill="none" />
      <path d="M200 500l40 17 30-15M266 474v28" stroke="#bebd8b" fill="none" strokeWidth=".8" />
      <path d="M110 510l24 15 1 11-23-13z" fill="#c3dcb8" />
      <path d="M110 510l11 7-2 5-8 1z" fill="#567278" />
      <path d="M199 521l32 14 1 13-31-14z" fill="#c5dcb6" />
      <path d="M199 521l22 10-12 1-8 1z" fill="#74939b" />
      <path d="M245 533l26-13v12l-27 16z" fill="#c3cfa0" />
      <path d="M251 530l20-10v9l-13 5z" fill="#8d9da0" />
      <g fill="none" strokeWidth="1.200">
        <path d="M57.500 634v-11M56 625l1.500-3 2 2" stroke="#0aa50a" />
        <path d="M58 635l8-4M69 630l1-1" stroke="#1010e0" strokeWidth="1.600" />
        <path d="M58 635l8 4M68 637l2 2" stroke="#e01010" strokeWidth="1.600" />
      </g>
    </svg>
  );
}

function View3D() {
  return (
    <section className="flex grow border border-[#a8a69c] bg-[#eae7e3] p-1 shadow-[inset_0_0_0_1px_#fffffa]">
      <div className="flex w-5 shrink-0 flex-col items-center pr-px">
        <Tool label="Axes" className="w-full max-h-5" icon={
          <Px><path d="M7 0v9L1 13M7 9l8 4" stroke="#36525e" strokeWidth="1.400" /></Px>
        } />
        <button type="button" aria-label="Rotate" className="flex h-5 items-center">
          <svg width="16" height="18" viewBox="0 0 16 18" fill="none" aria-hidden="true">
            <path d="M2 4c3-3 9-3 12 0M14 1v3h-3M14 14c-3 3-9 3-12 0M2 17v-3h3" stroke="#333" strokeWidth="1.300" />
            <text x="1" y="13" fontSize="10" fontWeight="700" fill="#23647f" fontFamily="Liberation Sans, sans-serif">3D</text>
          </svg>
        </button>
        <Tool label="Layers" className="w-full max-h-5" icon={
          <Px>
            <path d="M0 9.500h11l5 5H5zM0 5.500h11l5 5H5z" fill="#fff" stroke="#222" />
            <path d="M0 1.500h11l5 5H5z" fill="#a7cfe0" stroke="#222" />
          </Px>
        } />
        <Tool label="Solid view" className="w-full max-h-5" icon={
          <Px>
            <path d="M1.500 3l7-2 6 2-1 9-5.500 3.500L2 12z" fill="#8fc4de" stroke="#234" />
            <path d="M1.500 3l6 2 7-2M8 5v10" stroke="#234" />
            <path d="M2.500 3.800l5 2v8.500l-5-3z" fill="#c4e0ee" />
          </Px>
        } />
        <div className="flex w-full grow flex-col items-center bg-[#f2f2f2]">
          <button type="button" aria-label="Tilt up" className="flex h-[17px] items-center">
            <span className="border-x-[3px] border-b-4 border-x-transparent border-b-[#333]" />
          </button>
          <input
            type="range"
            aria-label="Tilt"
            defaultValue="34"
            className="min-h-0 w-[18px] grow appearance-none bg-transparent [writing-mode:vertical-lr] [&::-webkit-slider-thumb]:h-[14px] [&::-webkit-slider-thumb]:w-[18px] [&::-webkit-slider-thumb]:appearance-none [&::-webkit-slider-thumb]:rounded-[2px] [&::-webkit-slider-thumb]:border [&::-webkit-slider-thumb]:border-[#929292] [&::-webkit-slider-thumb]:bg-[#e4e4e6]"
          />
          <button type="button" aria-label="Tilt down" className="flex h-[17px] items-center">
            <span className="border-x-[3px] border-t-4 border-x-transparent border-t-[#333]" />
          </button>
        </div>
      </div>
      <div className="flex min-w-0 grow flex-col">
        <div className="flex h-[17px] shrink-0 items-center bg-[#efefef]">
          <button type="button" aria-label="Turn left" className="flex w-4 justify-center">
            <span className="border-y-[3px] border-r-4 border-y-transparent border-r-[#333]" />
          </button>
          <input
            type="range"
            aria-label="Turn"
            defaultValue="64"
            className="h-[15px] min-w-0 grow appearance-none bg-transparent [&::-webkit-slider-thumb]:h-[15px] [&::-webkit-slider-thumb]:w-[15px] [&::-webkit-slider-thumb]:appearance-none [&::-webkit-slider-thumb]:rounded-[2px] [&::-webkit-slider-thumb]:border [&::-webkit-slider-thumb]:border-[#929292] [&::-webkit-slider-thumb]:bg-[#e4e4e6]"
          />
          <button type="button" aria-label="Turn right" className="flex w-4 justify-center">
            <span className="border-y-[3px] border-l-4 border-y-transparent border-l-[#333]" />
          </button>
        </div>
        <div className="min-h-0 grow overflow-hidden bg-[#c1c1c1]">
          <Building />
        </div>
      </div>
    </section>
  );
}

/* ---------- drawing area ---------- */

function PlanCanvas() {
  return (
    <section className="min-w-0 grow overflow-hidden bg-white" aria-label="Plan">
      <svg width="594" height="595" viewBox="378 158 594 595" fill="none" aria-hidden="true">
        <g stroke="#4a8a9c" shapeRendering="crispEdges">
          <path d="M468 184.500h114M599 184.500h115M748 184.500h115M888.500 235v115M533 725.500h114" />
        </g>
        <g stroke="#00529b" shapeRendering="crispEdges">
          <path d="M462.500 190.500h270v183.500h-270z" />
          <path d="M462.500 379.500h270v120h-24v220h-246z" />
          <path d="M737.500 190.500h145v217h-145zM737.500 413.500h145v90h-145z" />
        </g>
        <path d="M572 617h26l1 3h-26z" fill="#fdb92c" />
        <path d="M833 294h1v2h-1zM833 298h1v5h-1z" fill="#17609f" />
        <path d="M834 299h1v4h-1z" fill="#7fc3e0" />
        <path d="M398 718l7.500 27-7.500-5-7.500 5z" stroke="#a9b6d0" strokeWidth="1.500" />
        <path d="M398 718v22l-7.500 5z" fill="#a9b6d0" />
      </svg>
    </section>
  );
}

/* ---------- dialogs ---------- */

const openings = ["Internal window", "External door", "Window 1", "Window 2"];

function TypesDialog() {
  return (
    <Dialog title="Types of glazed openings" className="top-[227px] left-[278px] h-[309px] w-[426px]">
      <div className="flex h-[29px] items-end pl-1">
        <Tool label="Add" icon={<AddIcon />} />
        <Tool label="Delete" icon={<RemoveIcon />} />
        <Tool label="Copy" icon={<CopyIcon />} />
        <Tool label="Edit" icon={<EditIcon />} />
        <span className="w-1.5" />
        <Tool label="Import" icon={<Floppy arrow="#12dc22" />} />
        <Tool label="Export" icon={<Floppy arrow="#f01818" right />} />
        <Tool label="Library" icon={<Floppy arrow="#16d4e8" gears />} />
      </div>
      <div className="mx-1.5 grow border border-[#828790] bg-white px-px">
        <table className="w-full border-collapse">
          <thead>
            <tr className="h-6 border-b border-[#d2d2d2] bg-linear-to-b from-white from-40% to-[#f1f2f4] to-50%">
              <th className="w-6 border-r border-[#dedede]" aria-label="Number" />
              <th className="pl-1.5 text-left font-normal">Reference</th>
            </tr>
          </thead>
          <tbody>
            {openings.map((o, i) => (
              <tr key={o} className={"h-[21px] border-b border-[#bfbfbf] " + (i === 0 ? "bg-[#c9dde8]" : "")}>
                <td className="border-r border-[#bfbfbf] bg-[#fdfdc9] pr-[3px] text-right">{i + 1}</td>
                <td className="border-r border-[#bfbfbf] pl-[3px]">{o}</td>
              </tr>
            ))}
          </tbody>
        </table>
      </div>
      <footer className="mt-1.5 flex h-9 items-center border-t border-[#bdbbb7] bg-[#dedbd7] px-1.5">
        <PushButton primary className="w-[58px]">Accept</PushButton>
      </footer>
    </Dialog>
  );
}

function OpeningDialog() {
  const field = "h-5 w-[52px] rounded-[2px] border border-[#e2e3ea] border-t-[#abadb3] bg-white pr-[3px] text-right outline-none";
  return (
    <Dialog dark title="Glazed openings (Type 1)" className="top-[419px] left-[505px] h-[198px] w-[386px]">
      <div className="flex grow px-1.5 pt-1.5 pb-1.5">
        <div className="flex grow flex-col pr-1.5">
          <div className="flex items-center gap-1 pt-[3px] pr-[3px] pl-[3px]">
            <label htmlFor="reference">Reference</label>
            <input
              id="reference"
              defaultValue="Internal window"
              className="h-5 min-w-0 grow rounded-[2px] border border-[#b5cfe7] border-t-[#3d7bad] bg-white px-0.5 outline-none"
            />
          </div>
          <fieldset className="mt-[9px] grow border border-[#696969] bg-[#fafafa]">
            <legend className="float-left mb-2.5 h-4 w-full border-b border-[#696969] bg-[#d0cdc8] pl-[3px] leading-[16px]">Properties</legend>
            <div className="clear-both flex flex-col gap-1.5 pr-[9px] pl-[9px]">
              <div className="flex items-center justify-between">
                <label htmlFor="transmission">Transmission grade</label>
                <input id="transmission" defaultValue="0.90" className={field} />
              </div>
              <div className="flex items-center justify-between">
                <label htmlFor="refraction">Refraction index</label>
                <input id="refraction" defaultValue="1.520" className={field} />
              </div>
            </div>
          </fieldset>
        </div>
        <div className="flex w-[34px] flex-col items-center gap-2 border-l border-[#a0a0a0] pt-[3px] pl-1.5">
          <Tool label="Import" icon={<Floppy arrow="#12dc22" />} />
          <Tool label="Export" icon={<Floppy arrow="#f01818" right />} />
        </div>
      </div>
      <footer className="flex h-9 items-center justify-between border-t border-[#bdbbb7] bg-[#dedbd7] px-1.5">
        <PushButton primary className="w-[58px]">Accept</PushButton>
        <PushButton className="w-[52px]">Cancel</PushButton>
      </footer>
    </Dialog>
  );
}

/* ---------- red call-outs ---------- */

function Callouts() {
  return (
    <svg width="983" height="764" viewBox="0 0 983 764" fill="none" className="pointer-events-none absolute top-0 left-0" aria-hidden="true">
      <g stroke="#ff0000" strokeWidth="2">
        <rect x="85" y="58" width="36" height="37" rx="3" strokeWidth="2.500" />
        <rect x="358" y="260" width="25" height="27" rx="3" strokeWidth="2.500" />
        <path d="M121 95C205 113 285 131 336 154C380 173 408 191 419 210" />
        <path d="M382 287C402 330 425 368 450 397C466 418 480 430 494 437" />
      </g>
      <path d="M430 227L409 209l10-1 8-6zM507 443l-26 1 6-7-1-11z" fill="#ff0000" />
    </svg>
  );
}

/* ---------- window ---------- */

export default function App() {
  return (
    <div className="relative flex h-screen min-h-[640px] flex-col overflow-hidden bg-[#2e7dce] px-[5px] pt-px pb-[5px] font-['Liberation_Sans',Arial,sans-serif] text-[11px] leading-4 text-black shadow-[inset_0_0_0_1px_#07489a]">
      <header className="relative shrink-0">
        <div className="flex h-[30px] pt-1 pl-[49px]">
          <div className="flex h-[26px] w-[157px] shrink-0 items-center bg-[#f9f9f8]">
            <Tool label="Save" className="w-[25px]" icon={<SaveIcon />} />
            <Tool label="Undo" className="w-[26px]" icon={<UndoIcon />} />
            <Tool label="Redo" className="w-[26px]" icon={<UndoIcon gray />} />
            <Tool label="Print" className="w-[26px]" icon={<PrinterIcon />} />
            <Tool label="Print preview" className="w-[26px]" icon={<PreviewIcon />} />
            <Tool label="Export" className="w-7" icon={<><ExportIcon /><Caret /></>} />
          </div>
          <h1 className="grow pt-1.5 pl-1 text-center text-xs leading-4 font-bold text-white">CYPELUX</h1>
          <div className="flex shrink-0">
            <button type="button" aria-label="Minimize" className="flex w-12 items-center justify-center">
              <span className="h-px w-[10px] bg-white" />
            </button>
            <button type="button" aria-label="Maximize" className="flex w-12 items-center justify-center">
              <span className="size-[10px] border border-white" />
            </button>
            <button type="button" aria-label="Close" className="flex w-12 items-center justify-center">
              <CloseGlyph />
            </button>
          </div>
        </div>
        <div className="flex h-[25px] items-center justify-end bg-[#b3b3b3]">
          <Tool label="Previous view" className="w-[26px]" icon={<ZoomPrev />} />
          <Tool label="Zoom all" className="w-[26px]" icon={<ZoomAll />} />
          <Tool label="Zoom x2" className="w-[26px]" icon={<ZoomX2 />} />
          <Tool label="Redraw" className="w-[26px]" icon={<Redraw />} />
          <Tool label="Zoom window" className="w-[26px]" icon={<ZoomWindow />} />
          <Tool label="Pan" className="w-[26px]" icon={<HandIcon />} />
          <Tool label="Full view" className="w-[26px]" icon={<RegenIcon />} />
          <span className="mx-1 h-full w-px bg-[#8c8c8c]" />
          <Tool label="Snap" className="w-[26px]" icon={<MagnetIcon />} />
          <Tool label="Frame" className="w-[26px]" icon={<SquareIcon />} />
          <Tool label="Grid" className="w-[26px]" icon={<GridIcon />} />
          <Tool label="Grid snap" className="w-[26px]" icon={<OrthoIcon />} />
          <Tool label="Keyboard input" className="w-[26px]" icon={<KeyboardIcon />} />
          <Tool label="Dimensions" className="w-[26px]" icon={<DimIcon />} />
          <Tool label="Orthogonal" className="w-[26px]" icon={<AngleIcon />} />
          <Tool label="DXF template" className="w-[26px]" icon={<MaskIcon />} />
          <Tool label="Settings" className="w-[26px]" icon={<ToolsIcon />} />
          <span className="mx-1 h-full w-px bg-[#8c8c8c]" />
          <Tool label="Web" className="w-7" icon={<><GlobeIcon /><Caret /></>} />
          <Tool label="Help" className="w-7" icon={<><BookIcon /><Caret /></>} />
        </div>
        <div className="absolute top-1 left-0 size-[48px] border border-[#c9c9c9] bg-white p-[3px]">
          <svg viewBox="0 0 40 40" className="block size-full" aria-hidden="true">
            <defs>
              <linearGradient id="appGold" x1="0" y1="0" x2="1" y2="1">
                <stop offset="0" stopColor="#fff200" />
                <stop offset=".5" stopColor="#e8cf00" />
                <stop offset="1" stopColor="#c79400" />
              </linearGradient>
            </defs>
            <path d="M0 0h40v40H0z" fill="url(#appGold)" />
            <path d="M15.500 3.500q5-2 10 0v8h-10z" fill="#2b2b12" />
            <path d="M15.500 5.500h10M15.500 8.500h10" stroke="#8a7a10" strokeWidth="1" />
            <path d="M16 11h9c0 5 4 6 4 12.500a8.700 8.700 0 01-17.400 0C11.600 17 16 16 16 11z" fill="#fff" stroke="#3a3508" strokeWidth=".8" />
            <path d="M5.500 24H9M31.500 24H35M7 14l3 2M33.500 14l-3 2M8 33l3-2.500M33 33l-3-2.500M14 37l1.500-3M27 37l-1.500-3M20.500 38.500V35" stroke="#3a3508" strokeWidth="1.700" />
          </svg>
        </div>
      </header>

      <nav className="flex h-[93px] shrink-0 gap-0.5 overflow-hidden bg-[#f9f9f7]">
        <Ribbon label="Project" className="w-[120px]">
          <div className="grid w-[117px] grid-cols-3 content-start">
            <IconButton label="Zone types" icon={<FolderZone />} />
            <IconButton label="External luminaires" icon={<FolderLamp />} />
            <IconButton label="Types of glazed openings" icon={<FolderOpening />} className="bg-[#90cbf5]" />
            <IconButton label="Internal luminaires" icon={<FolderBulb />} />
            <IconButton label="Emergency luminaires" icon={<FolderEmergency />} />
          </div>
        </Ribbon>
        <Ribbon label="Lighting" className="w-[273px]">
          <BigButton className="w-[39px]" icon={<ZoneIcon />} label="Zone" />
          <BigButton className="w-[43px]" icon={<BulbIcon />} label={"Internal\nlighting"} />
          <BigButton className="w-[45px]" icon={<LampIcon />} label={"External\nlighting"} />
          <BigButton className="w-[59px]" icon={<EmergencyIcon />} label={"Emergency\nlighting"} />
          <BigButton className="w-[46px]" icon={<SunIcon />} label="Daylight" />
          <div>
            <IconButton label="Line arrangement" icon={<LineDots />} />
            <IconButton label="Circular arrangement" icon={<CircleDots />} />
          </div>
        </Ribbon>
        <Ribbon label="Safety/Protection" className="w-[103px]">
          <BigButton className="w-[44px]" icon={<EscapeIcon />} label={"Escape\nroute"} />
          <BigButton className="w-[57px]" icon={<ExtinguisherIcon />} label="Equipment" />
        </Ribbon>
        <Ribbon label="Edit" className="w-[206px]">
          <div className="grid w-[78px] grid-cols-2 content-start">
            <IconButton label="Edit" icon={<PencilIcon />} />
            <IconButton label="Rotate node" icon={<RotateNode />} />
            <IconButton label="Move node" icon={<MoveNode />} />
            <IconButton label="Erase" icon={<EraserIcon />} />
          </div>
          <span className="mx-[3px] h-full w-px bg-[#d0d0d0]" />
          <div className="grid w-[117px] grid-cols-3 content-start">
            <IconButton label="Copy" icon={<CopyShapes />} />
            <IconButton label="Mirror copy" icon={<MirrorIcon />} />
            <IconButton label="Rotate" icon={<TurnIcon />} />
            <IconButton label="Mirror move" icon={<SplitIcon />} />
            <IconButton label="Move" icon={<MoveIcon />} />
            <IconButton label="Copy to floor" icon={<LayersMove />} />
          </div>
        </Ribbon>
        <Ribbon label="Analysis" className="w-[126px]">
          <BigButton className="w-[42px]" icon={<CalcIcon />} label={"Update\nresults"} />
          <BigButton className="w-[42px]" icon={<CalcZone />} label={"Update\nzone"} />
          <div>
            <IconButton label="Check point" icon={<LoupeIcon />} className="border border-[#a3a3a3] bg-[#efefee]" />
            <IconButton label="Show checks" icon={<CheckCross />} />
          </div>
        </Ribbon>
        <Ribbon label="View" className="w-[124px]">
          <BigButton className="w-[39px]" icon={<EyeIcon />} label={"New\nview"} />
          <BigButton className="w-[43px]" icon={<RenderIcon />} label="Render" />
          <IconButton label="View options" icon={<GearIcon />} className="self-center" />
        </Ribbon>
        <Ribbon label="" className="w-[60px] border-l">
          <span />
        </Ribbon>
      </nav>

      <div className="h-[3px] shrink-0 bg-[#a0a0a0] pl-[901px]">
        <div className="h-full bg-[#f9f9f7]" />
      </div>

      <main className="flex min-h-0 grow gap-1.5 bg-[#b3b3b3] p-1.5">
        <div className="flex w-[361px] shrink-0 flex-col">
          <FloorPlans />
          <div className="flex h-1.5 shrink-0 items-center justify-center gap-0.5">
            {[0, 1, 2, 3].map((d) => (
              <span key={d} className="size-0.5 bg-[#666]" />
            ))}
          </div>
          <View3D />
          <section className="mt-1.5 flex h-[87px] shrink-0 flex-col border border-[#696969] bg-[#fafafa]">
            <label className="flex h-[21px] items-center gap-[3px] border-b border-[#696969] bg-[#d1cdc8] pl-[3px]">
              <input type="checkbox" className="size-[13px] appearance-none border border-[#8e8f8f] bg-[#e6e7ea] shadow-[inset_0_0_0_2px_#f6f6f6]" />
              View results
            </label>
          </section>
        </div>
        <PlanCanvas />
      </main>

      <TypesDialog />
      <OpeningDialog />
      <Callouts />
    </div>
  );
}
